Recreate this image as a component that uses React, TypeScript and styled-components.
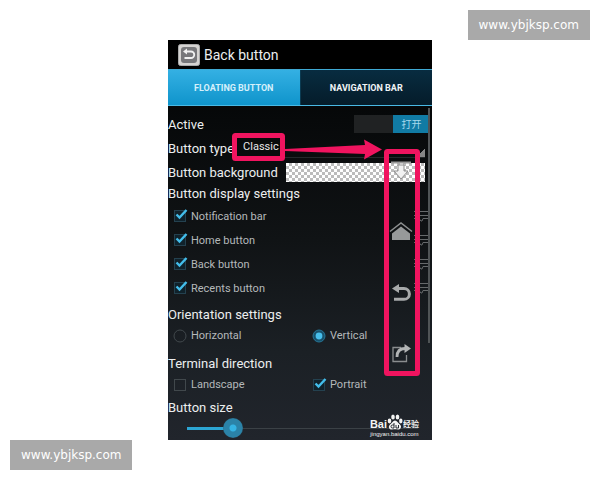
import React, { useState } from "react";
import styled, { createGlobalStyle } from "styled-components";

const pink = "#f0145f";

const GlobalStyle = createGlobalStyle`
  * { box-sizing: border-box; }
  body { margin: 0; background: #fff; font-family: Roboto, "Noto Sans CJK SC", sans-serif; }
`;

const Page = styled.div`
  min-height: 100vh;
  display: flex;
  flex-direction: column;
`;

const Edge = styled.div<{ $end?: boolean }>`
  display: flex;
  height: 40px;
  padding: 0 10px;
  justify-content: ${(p) => (p.$end ? "flex-end" : "flex-start")};
  align-items: ${(p) => (p.$end ? "flex-end" : "flex-start")};
`;

const SiteTag = styled.a`
  padding: 0 11px;
  line-height: 30px;
  background: #a9a9a9;
  color: #fff;
  font-family: "DejaVu Sans", sans-serif;
  font-size: 12px;
  text-decoration: none;
`;

const Phone = styled.main`
  position: relative;
  width: 44%;
  min-width: 264px;
  margin: 0 auto;
  overflow: hidden;
  background: linear-gradient(#000 0%, #07090a 20%, #101315 50%, #1b2025 78%, #21252c 100%);
  color: #eceeef;
`;

const TitleBar = styled.header`
  display: flex;
  align-items: center;
  gap: 4px;
  height: 29px;
  padding: 0 10px;
  background: #000;
`;

const Title = styled.h1`
  margin: 0;
  font-size: 14px;
  font-weight: 400;
`;

const Tabs = styled.nav`
  display: flex;
  height: 37px;
  border-top: 1px solid #3fa9d3;
  border-bottom: 1px solid #49b9e4;
`;

const Tab = styled.button<{ $active?: boolean }>`
  flex: 1;
  border: 0;
  border-right: ${(p) => (p.$active ? "1px solid #0b3b52" : "0")};
  padding: 0;
  font-family: inherit;
  font-size: 9px;
  font-weight: 700;
  color: ${(p) => (p.$active ? "#d5f0fb" : "#f0f4f6")};
  background: ${(p) => (p.$active ? "linear-gradient(#34b0e3, #0f94cb)" : "linear-gradient(#082c40, #051c2a)")};
`;

const Settings = styled.div`
  padding-top: 6px;
`;

const Row = styled.div`
  display: flex;
  align-items: center;
  height: 24px;
`;

const Label = styled.label`
  font-size: 13px;
  white-space: nowrap;
`;

const Toggle = styled.button`
  display: flex;
  justify-content: flex-end;
  width: 76px;
  height: 18px;
  margin: 0 2px 0 auto;
  padding: 0;
  border: 0;
  background: #202223;
`;

const ToggleThumb = styled.span`
  width: 37px;
  line-height: 18px;
  background: #117ba4;
  color: #a5d9ec;
  font-family: "Noto Sans CJK SC", sans-serif;
  font-size: 10px;
  text-align: center;
`;

const TypeSelect = styled.select`
  flex: 1;
  appearance: none;
  height: 20px;
  margin: 0 7px 0 2px;
  padding: 0 0 2px 7px;
  border: 0;
  border-bottom: 1px solid #24282a;
  border-radius: 0;
  color: #e8e8e8;
  font-family: inherit;
  font-size: 11px;
  background: linear-gradient(135deg, transparent 50%, #858585 50%) right bottom / 8px 8px no-repeat;
`;

const Swatch = styled.button`
  flex: 1;
  height: 19px;
  margin: 0 7px 0 8px;
  border: 0;
  background: repeating-conic-gradient(#bcbcbc 0 25%, #fff 0 50%) 0 0 / 6px 6px;
`;

const Group = styled.fieldset<{ $gap?: number }>`
  margin: ${(p) => p.$gap ?? 0}px 0 0;
  padding: 0;
  border: 0;
  min-width: 0;
`;

const Legend = styled.legend`
  display: block;
  padding: 0;
  line-height: 20px;
  font-size: 13px;
`;

const Pair = styled.div`
  display: grid;
  grid-template-columns: 139px 1fr;
  height: 21px;
`;

const Choice = styled.label`
  flex: 1;
  display: flex;
  align-items: center;
  gap: 4px;
  padding-left: 6px;
  font-size: 11px;
  color: #b4b8ba;
`;

const Mark = styled.span`
  position: relative;
  display: flex;
  width: 13px;
  height: 14px;
`;

const MarkInput = styled.input`
  appearance: none;
  position: absolute;
  inset: 0;
  margin: 0;
`;

const Grip = styled.svg`
  margin: 0 4px 0 auto;
`;

const SizeInput = styled.input`
  appearance: none;
  display: block;
  width: calc(100% - 13px);
  height: 20px;
  margin: 0 4px 2px 9px;
  background:
    linear-gradient(#2ca5d3, #2ca5d3) 10px center / calc((100% - 20px) * var(--level)) 3px no-repeat,
    linear-gradient(#3b4146, #3b4146) 10px center / calc(100% - 20px) 1px no-repeat;
  &::-webkit-slider-thumb {
    appearance: none;
    width: 20px;
    height: 20px;
    border-radius: 50%;
    background: radial-gradient(circle, #35b4e4 0 3px, #2b83a8 4px 9px, #2b6d8a 10px);
  }
`;

const Scrollbar = styled.div`
  position: absolute;
  top: 68px;
  right: 2px;
  width: 2px;
  height: 235px;
  background: #505456;
`;

const Overlay = styled.svg`
  position: absolute;
  top: 0;
  right: 0;
  pointer-events: none;
`;

const Credit = styled.div`
  position: absolute;
  right: 13px;
  bottom: 2px;
  color: #f4f4f4;
  text-align: center;
`;

const CreditName = styled.div`
  display: flex;
  align-items: flex-end;
  justify-content: center;
  line-height: 12px;
  font-family: "Liberation Sans", "Noto Sans CJK SC", sans-serif;
  font-size: 11px;
  font-weight: 700;
`;

const CreditCjk = styled.span`
  font-family: "Noto Sans CJK SC", sans-serif;
  font-size: 8px;
`;

const CreditUrl = styled.div`
  font-family: "Liberation Sans", sans-serif;
  font-size: 6px;
  line-height: 8px;
`;

function Check({ label, initial = true, grip }: { label: string; initial?: boolean; grip?: boolean }) {
  const [on, setOn] = useState(initial);
  return (
    <Choice>
      <Mark>
        <MarkInput type="checkbox" checked={on} onChange={() => setOn(!on)} />
        <svg width="13" height="14" viewBox="0 0 13 14" fill="none" overflow="visible">
          <rect x=".5" y="1.5" width="11" height="11" fill={on ? "#10222b" : "none"} stroke={on ? "#24414f" : "#41484c"} />
          {on && <path d="M2.5 5.5 5.5 8.5 12.5 1" stroke="#43bdea" strokeWidth="2.4" />}
        </svg>
      </Mark>
      {label}
      {grip && (
        <Grip width="14" height="12" viewBox="0 0 14 12" fill="none" stroke="#66696b">
          <path d="M0 1.5H14M0 5.5H14M0 8.5H5L7 11H8L9 8.5H14" />
        </Grip>
      )}
    </Choice>
  );
}

function Radio({ label, on, pick }: { label: string; on: boolean; pick: () => void }) {
  return (
    <Choice>
      <Mark>
        <MarkInput type="radio" name="orientation" checked={on} onChange={pick} />
        <svg width="13" height="14" viewBox="0 0 13 14" overflow="visible">
          <circle cx="6" cy="7" r="6" fill={on ? "#18516b" : "none"} stroke={on ? "#277596" : "#41484c"} />
          {on && <circle cx="6" cy="7" r="3.4" fill="#48bfeb" />}
        </svg>
      </Mark>
      {label}
    </Choice>
  );
}

function Annotations() {
  return (
    <Overlay width="264" height="400" viewBox="0 0 264 400" fill="none">
      <path d="M223 122.5H243" stroke="#999" strokeWidth="2" />
      <path d="M230 125H236V131H240L233 139 226 131H230Z" stroke="#8f8f8f" fill="#f1f1f1" />
      <path d="M222 191.5 233 183 244 191.5" stroke="#8d8f90" strokeWidth="1.5" />
      <path d="M233 186.5 242 193.5V200H224V193.5Z" fill="#97999a" />
      <path d="M229 248.5H236A5.4 5.4 0 0 1 236 259.3H226" stroke="#a7a9aa" strokeWidth="3" />
      <path d="M224 248.5 231 244V253Z" fill="#a7a9aa" />
      <path d="M233 307.5H225V321.5H238.5V315" stroke="#8a8d8f" strokeWidth="1.3" />
      <path d="M229 317C229 311 232 308.5 237 308.5" stroke="#b2b4b5" strokeWidth="2.8" />
      <path d="M243 308.5 236.5 304V313Z" fill="#b2b4b5" />
      <rect x="66.5" y="95.5" width="48" height="23" rx="1" stroke={pink} strokeWidth="5" />
      <rect x="218.5" y="111.5" width="31" height="222" rx="1" stroke={pink} strokeWidth="5" />
      <path d="M117 109 197 105 196 99.5 214 109.5 196 119.5 197 114 117 111Z" fill={pink} />
    </Overlay>
  );
}

export default function App() {
  const [direction, setDirection] = useState("Vertical");
  const [size, setSize] = useState(20);
  return (
    <Page>
      <GlobalStyle />
      <Edge $end>
        <SiteTag href="#top">www.ybjksp.com</SiteTag>
      </Edge>
      <Phone>
        <TitleBar>
          <svg width="22" height="22" viewBox="0 0 22 22" fill="none">
            <rect x=".5" y=".5" width="21" height="21" rx="2" fill="#d5d3d1" stroke="#aaa" />
            <rect x="3" y="3" width="16" height="16" rx="3" fill="#77777a" />
            <path d="M8 7.5H13A3 3 0 0 1 13 14H6.5" stroke="#f1f1f1" strokeWidth="1.8" />
            <path d="M5 7.5 9 4.5V10.5Z" fill="#f1f1f1" />
          </svg>
          <Title>Back button</Title>
        </TitleBar>
        <Tabs>
          <Tab $active>FLOATING BUTTON</Tab>
          <Tab>NAVIGATION BAR</Tab>
        </Tabs>
        <Settings>
          <Row>
            <Label htmlFor="active">Active</Label>
            <Toggle id="active" role="switch" aria-checked="true">
              <ToggleThumb>打开</ToggleThumb>
            </Toggle>
          </Row>
          <Row>
            <Label htmlFor="type">Button type</Label>
            <TypeSelect id="type">
              <option>Classic</option>
            </TypeSelect>
          </Row>
          <Row>
            <Label htmlFor="background">Button background</Label>
            <Swatch id="background" />
          </Row>
          <Group>
            <Legend>Button display settings</Legend>
            {["Notification bar", "Home button", "Back button", "Recents button"].map((name) => (
              <Row key={name}>
                <Check label={name} grip />
              </Row>
            ))}
          </Group>
          <Group $gap={5}>
            <Legend>Orientation settings</Legend>
            <Pair>
              {["Horizontal", "Vertical"].map((name) => (
                <Radio key={name} label={name} on={direction === name} pick={() => setDirection(name)} />
              ))}
            </Pair>
          </Group>
          <Group $gap={8}>
            <Legend>Terminal direction</Legend>
            <Pair>
              <Check label="Landscape" initial={false} />
              <Check label="Portrait" />
            </Pair>
          </Group>
          <Group $gap={3}>
            <Legend as="label" htmlFor="size">Button size</Legend>
            <SizeInput
              id="size"
              type="range"
              value={size}
              onChange={(e) => setSize(Number(e.target.value))}
              style={{ "--level": size / 100 } as React.CSSProperties}
            />
          </Group>
        </Settings>
        <Scrollbar />
        <Credit>
          <CreditName>
            Bai
            <svg width="16" height="16" viewBox="0 0 16 16" fill="#f4f4f4">
              <ellipse cx="2.5" cy="7" rx="1.8" ry="2.4" />
              <ellipse cx="6" cy="3" rx="1.8" ry="2.6" />
              <ellipse cx="10.5" cy="3" rx="1.8" ry="2.6" />
              <ellipse cx="13.8" cy="7" rx="1.7" ry="2.4" />
              <path d="M8 6.5C10 6.5 11 9 13 10.5 15.5 13 13 16 11 15.5 9 15 7 15 5 15.5 2.5 16 .5 13 3 10.5 5 9 6 6.5 8 6.5Z" />
              <path d="M7 9V14H5.5A1.5 1.5 0 0 1 5.5 11H7M9 11V14H11.5V11" fill="none" stroke="#292d33" />
            </svg>
            <CreditCjk>经验</CreditCjk>
          </CreditName>
          <CreditUrl>jingyan.baidu.com</CreditUrl>
        </Credit>
        <Annotations />
      </Phone>
      <Edge>
        <SiteTag href="#top">www.ybjksp.com</SiteTag>
      </Edge>
    </Page>
  );
}
